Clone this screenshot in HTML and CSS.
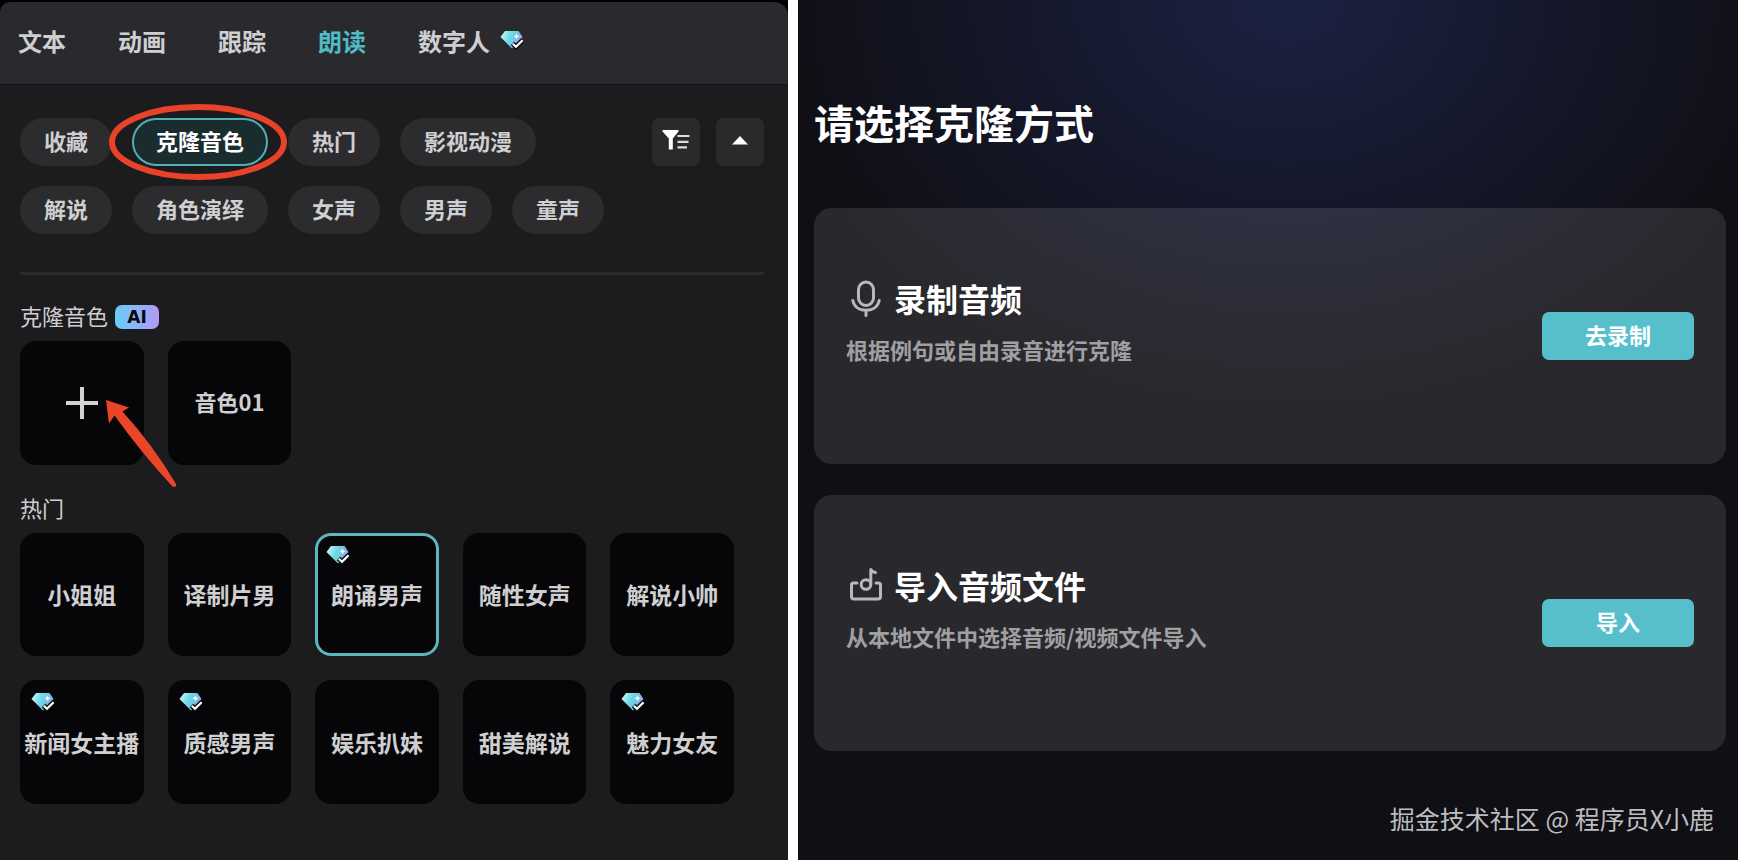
FILE: index.html
```html
<!DOCTYPE html>
<html lang="zh-CN">
<head>
<meta charset="utf-8">
<meta name="viewport" content="width=device-width, initial-scale=1">
<title>克隆音色</title>
<link rel="stylesheet" href="styles.css">
</head>
<body>
<svg class="defs" aria-hidden="true">
  <defs>
    <linearGradient id="gem-fill" x1="0" y1="0" x2="1" y2="0.3">
      <stop offset="0" stop-color="#e2f8fa"/>
      <stop offset="0.45" stop-color="#6fdde8"/>
      <stop offset="0.75" stop-color="#6fc4e8"/>
      <stop offset="1" stop-color="#a7a2ea"/>
    </linearGradient>
    <symbol id="gem" viewBox="0 0 24 20">
      <path d="M5 1H18.500L22.500 7L12 18.500L0.500 7Z" fill="url(#gem-fill)"/>
      <path d="M16.500 3.200L17.400 5.400L19.600 6.300L17.400 7.200L16.500 9.400L15.600 7.200L13.400 6.300L15.600 5.400Z" fill="#fff"/>
      <path d="M12.500 13.500L16 16.800L22.500 10.200" fill="none" stroke="#101014" stroke-width="5"/>
      <path d="M12.800 13.700L16 16.800L22.600 10.200" fill="none" stroke="#fff" stroke-width="2.200"/>
    </symbol>
  </defs>
</svg>
<main class="board">
  <section class="voices">
    <nav class="tabs">
      <button class="tab" type="button">文本</button>
      <button class="tab" type="button">动画</button>
      <button class="tab" type="button">跟踪</button>
      <button class="tab tab-active" type="button">朗读</button>
      <button class="tab" type="button">数字人<svg class="gem"><use href="#gem"/></svg></button>
    </nav>
    <div class="voices-body">
      <div class="filters">
        <div class="chips">
          <button class="chip" type="button">收藏</button>
          <button class="chip chip-active" type="button">克隆音色<svg class="ring" viewBox="0 0 178 76" aria-hidden="true"><ellipse cx="89" cy="38" rx="86" ry="35"/></svg></button>
          <button class="chip" type="button">热门</button>
          <button class="chip" type="button">影视动漫</button>
          <button class="chip" type="button">解说</button>
          <button class="chip" type="button">角色演绎</button>
          <button class="chip" type="button">女声</button>
          <button class="chip" type="button">男声</button>
          <button class="chip" type="button">童声</button>
        </div>
        <div class="tools">
          <button class="tool" type="button" aria-label="筛选">
            <svg width="48" height="48" viewBox="0 0 48 48"><path d="M10.500 12H26.500V13.500L20.800 20.500V31.500H16.800V20.500L10.500 13.500Z" fill="#fff"/><path d="M25.500 18H37.500M25.500 23.800H36.500M25.500 29.300H35" stroke="#dcdcde" stroke-width="2.200"/></svg>
          </button>
          <button class="tool" type="button" aria-label="收起">
            <svg width="48" height="48" viewBox="0 0 48 48"><path d="M24 18L32 26.500H16Z" fill="#fff"/></svg>
          </button>
        </div>
      </div>
      <hr class="divider">
      <h2 class="group-title">克隆音色<span class="ai">AI</span></h2>
      <div class="tiles">
        <button class="tile tile-custom" type="button" aria-label="添加音色">
          <svg width="32" height="32" viewBox="0 0 32 32"><path d="M16 0V32M0 16H32" stroke="#d2d2d4" stroke-width="4"/></svg>
          <svg class="arrow" viewBox="0 0 74 90" aria-hidden="true"><path d="M1 1L24 8.500L17.500 12.500Q48 46 71 85Q72 88 68 88Q38 56 9.500 16.500L4 24.500Z"/></svg>
        </button>
        <button class="tile tile-custom tile-named" type="button">音色01</button>
      </div>
      <h2 class="group-title">热门</h2>
      <div class="tiles">
        <button class="tile" type="button">小姐姐</button>
        <button class="tile" type="button">译制片男</button>
        <button class="tile tile-active" type="button"><svg class="gem gem-corner"><use href="#gem"/></svg>朗诵男声</button>
        <button class="tile" type="button">随性女声</button>
        <button class="tile" type="button">解说小帅</button>
        <button class="tile" type="button"><svg class="gem gem-corner"><use href="#gem"/></svg>新闻女主播</button>
        <button class="tile" type="button"><svg class="gem gem-corner"><use href="#gem"/></svg>质感男声</button>
        <button class="tile" type="button">娱乐扒妹</button>
        <button class="tile" type="button">甜美解说</button>
        <button class="tile" type="button"><svg class="gem gem-corner"><use href="#gem"/></svg>魅力女友</button>
      </div>
    </div>
  </section>
  <section class="clone">
    <h1 class="clone-title">请选择克隆方式</h1>
    <div class="cards">
      <article class="card">
        <div class="card-text">
          <h2 class="card-title">
            <svg class="card-icon" viewBox="0 0 40 40"><rect x="12.500" y="4" width="15" height="23.500" rx="7.500"/><path d="M6.800 22.500C8 28.500 13 32.300 20 32.300S32 28.500 33.200 22.500M20 32.300V37.500"/></svg>
            录制音频
          </h2>
          <p class="card-desc">根据例句或自由录音进行克隆</p>
        </div>
        <button class="action" type="button">去录制</button>
      </article>
      <article class="card">
        <div class="card-text">
          <h2 class="card-title">
            <svg class="card-icon" viewBox="0 0 40 40"><path d="M11 18H7.500Q5.500 18 5.500 20V31.500Q5.500 34 8 34H32Q34.500 34 34.500 31.500V20Q34.500 18 32.500 18H30"/><circle cx="20" cy="19.500" r="4.800"/><path d="M24.800 19.500V4.500Q26 7 29.500 7.500"/></svg>
            导入音频文件
          </h2>
          <p class="card-desc">从本地文件中选择音频/视频文件导入</p>
        </div>
        <button class="action" type="button">导入</button>
      </article>
    </div>
    <footer class="credit">掘金技术社区 @ 程序员X小鹿</footer>
  </section>
</main>
</body>
</html>
```
FILE: styles.css
```css
* {
  box-sizing: border-box;
}

body {
  margin: 0;
  background: #fff;
  font-family: "Noto Sans CJK SC", sans-serif;
}

button {
  border: 0;
  padding: 0;
  background: none;
  color: inherit;
  font: inherit;
}

h1,
h2,
p {
  margin: 0;
}

.defs {
  position: absolute;
  width: 0;
  height: 0;
}

.board {
  display: grid;
  grid-template-columns: 394fr 470fr;
  gap: 10px;
  min-height: 100vh;
}

/* Voice library */

.voices {
  padding-top: 2px;
  background: linear-gradient(#020204 40px, #1c1c1e 40px);
  color: #cfcfd1;
}

.tabs {
  display: flex;
  gap: 52px;
  height: 83px;
  padding: 0 18px;
  border-bottom: 1px solid #131315;
  border-radius: 10px 14px 0 0;
  background: #2a2a2e;
}

.tab {
  display: flex;
  align-items: center;
  gap: 10px;
  height: 76px;
  font-size: 24px;
  font-weight: 700;
}

.tab-active {
  color: #4fbcc6;
}

.gem {
  width: 24px;
  height: 20px;
}

.voices-body {
  padding: 33px 24px 32px 20px;
}

.filters {
  display: flex;
  gap: 16px;
}

.chips {
  display: flex;
  flex: 1;
  flex-wrap: wrap;
  gap: 20px;
}

.chip {
  position: relative;
  height: 48px;
  padding: 0 24px 4px;
  border-radius: 24px;
  background: #2c2c2e;
  font-size: 22px;
  font-weight: 700;
  line-height: 44px;
}

.chip-active {
  z-index: 1;
  box-shadow: inset 0 0 0 2px #4fb0b5;
  background: #1b2c2f;
  color: #fff;
}

.ring {
  position: absolute;
  top: -14px;
  left: -23px;
  width: 178px;
  height: 76px;
  fill: none;
  stroke: #e8432a;
  stroke-width: 6;
}

.tools {
  display: flex;
  gap: 16px;
}

.tool {
  width: 48px;
  height: 48px;
  border-radius: 7px;
  background: #2a2a2d;
}

.tool svg {
  display: block;
}

.divider {
  height: 3px;
  margin: 38px 0 26px;
  border: 0;
  background: #2c2c2e;
}

.group-title {
  display: flex;
  align-items: center;
  gap: 7px;
  height: 28px;
  font-size: 22px;
  font-weight: 400;
}

.ai {
  width: 44px;
  height: 24px;
  margin-top: 4px;
  border-radius: 7px;
  background: linear-gradient(90deg, #69cdf6, #8cb4fa 50%, #b49bf4);
  color: #08080f;
  font-family: "DejaVu Sans", sans-serif;
  font-size: 17px;
  font-weight: 700;
  line-height: 24px;
  text-align: center;
}

.tiles {
  display: grid;
  grid-template-columns: repeat(5, 1fr);
  gap: 24px;
  margin: 12px 0 28px;
  padding-right: 30px;
}

.tile {
  position: relative;
  display: flex;
  align-items: center;
  justify-content: center;
  aspect-ratio: 1;
  border-radius: 16px;
  background: #060608;
  font-size: 23px;
  font-weight: 700;
  white-space: nowrap;
}

.tile-custom {
  font-size: 22px;
}

.tile-named {
  padding-bottom: 4px;
}

.tile-active {
  box-shadow: inset 0 0 0 3px #5db7be;
}

.gem-corner {
  position: absolute;
  top: 12px;
  left: 11px;
}

.arrow {
  position: absolute;
  z-index: 1;
  top: 58px;
  left: 85px;
  width: 74px;
  height: 90px;
  fill: #ea4529;
}

/* Clone method */

.clone {
  display: flex;
  flex-direction: column;
  padding: 92px 12px 20px 16px;
  background: radial-gradient(ellipse 55% 400px at 52% 0, #1b2142, #0f0f14) #0f0f14;
  color: #fff;
}

.clone-title {
  font-size: 40px;
  font-weight: 700;
  line-height: 60px;
}

.cards {
  display: grid;
  gap: 31px;
  margin-top: 56px;
}

.card {
  display: flex;
  align-items: center;
  justify-content: space-between;
  padding: 66px 32px;
  border-radius: 18px;
  background: rgba(255, 255, 255, 0.11);
}

.card-text {
  padding-bottom: 34px;
}

.card-title {
  display: flex;
  align-items: center;
  gap: 8px;
  font-size: 32px;
  font-weight: 700;
  line-height: 48px;
}

.card-icon {
  width: 40px;
  height: 40px;
  fill: none;
  stroke: #b9b9bc;
  stroke-width: 3;
  stroke-linecap: round;
  stroke-linejoin: round;
}

.card-desc {
  margin-top: 12px;
  color: #a0a0a3;
  font-size: 22px;
  font-weight: 700;
  line-height: 30px;
}

.action {
  width: 152px;
  height: 48px;
  padding-bottom: 4px;
  border-radius: 7px;
  background: #57bfcc;
  font-size: 22px;
  font-weight: 700;
  line-height: 44px;
}

.credit {
  margin-top: auto;
  padding: 0 12px 8px 0;
  color: #bdbdc0;
  font-size: 25px;
  line-height: 36px;
  text-align: right;
}
```
